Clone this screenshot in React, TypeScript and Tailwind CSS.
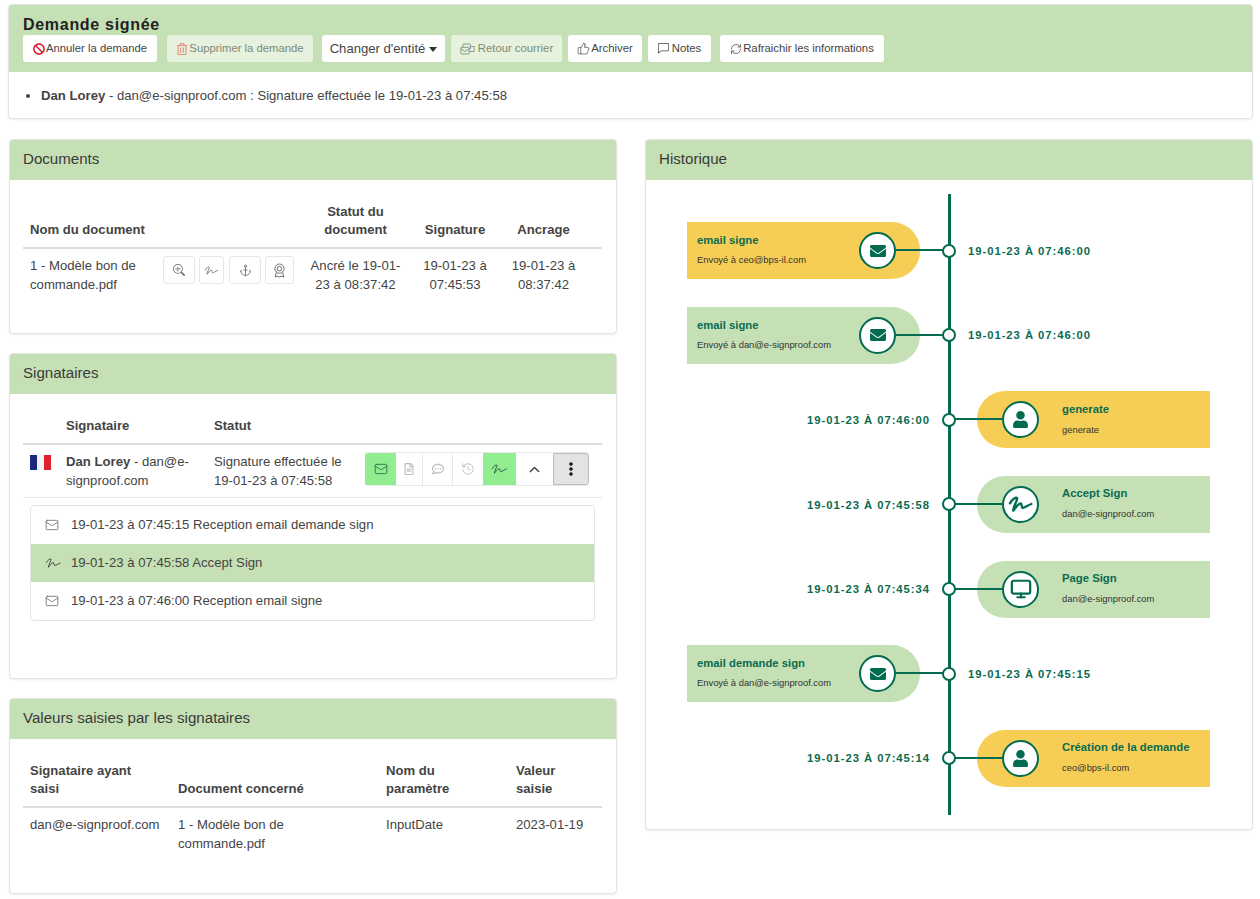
import React from "react";
import { BsZoomIn, BsThreeDotsVertical, BsChevronUp, BsChatLeft } from "react-icons/bs";
import { FaBan, FaEnvelope, FaRegCommentDots, FaRegFileAlt, FaRegTrashAlt, FaUser } from "react-icons/fa";
import { Anchor, History, Mail, Monitor, RefreshCw, ThumbsUp } from "lucide-react";

function SignIcon({ className = "w-[18px] h-[14px]" }: { className?: string }) {
  return (
    <svg viewBox="0 0 20 14" fill="none" stroke="currentColor" strokeWidth="1.1" strokeLinecap="round" className={className}>
      <path d="M1.5 6.500C3.500 3 6.500 1.500 7 2.500 7.500 4 4 9 4 12c0 1 3-5 5.500-5.500 1.500-.3.500 3.500 2 3.500 1.500 0 3.500-2 6.500-3" />
    </svg>
  );
}

function MailStackIcon() {
  return (
    <svg viewBox="0 0 18 14" fill="none" stroke="currentColor" strokeWidth="1" className="h-[12px] w-[15px]">
      <rect x="3.500" y="1" width="9" height="6" rx="1" />
      <rect x="1" y="5" width="10" height="8" rx="1" fill="#e6f1de" />
      <path d="M1 6.500l5 3.500 5-3.500M13 4h4v6h-6" />
    </svg>
  );
}

function RosetteIcon() {
  return (
    <svg viewBox="0 0 14 16" fill="none" stroke="currentColor" strokeWidth="1" className="h-[15px] w-[13px]">
      <circle cx="7" cy="6" r="5" />
      <circle cx="7" cy="6" r="2.500" />
      <path d="M3.500 10l-1 5 2.500-1 2 1 2-1 2.500 1-1-5" />
    </svg>
  );
}

function Flag() {
  return (
    <svg viewBox="0 0 21 15" className="mt-[3px] h-[15px] w-[21px]">
      <rect width="7" height="15" fill="#1a2a80" />
      <rect x="7" width="7" height="15" fill="#f4f4f6" />
      <rect x="14" width="7" height="15" fill="#e0202f" />
    </svg>
  );
}

function TopButton({ children, disabled, className = "" }: { children: React.ReactNode; disabled?: boolean; className?: string }) {
  return (
    <div
      className={`flex h-[27px] items-center justify-center gap-[1px] rounded-[3px] text-[11.3px] ${disabled ? "bg-[#e6f1de] text-[#7d8a78]" : "bg-white text-[#444]"} ${className}`}
    >
      {children}
    </div>
  );
}

function Card({ title, children, className = "" }: { title: string; children: React.ReactNode; className?: string }) {
  return (
    <section className={`w-[608px] overflow-hidden rounded-[4px] border border-[#e4e4e4] bg-white shadow-[0_1px_2px_rgba(0,0,0,0.08)] ${className}`}>
      <h2 className="flex h-[40px] items-center bg-[#c5e0b4] px-[13px] pb-[2px] text-[15.1px] font-normal text-[#3a3a3a]">{title}</h2>
      {children}
    </section>
  );
}

function DocButton({ children, className }: { children: React.ReactNode; className: string }) {
  return (
    <div className={`flex h-[28px] items-center justify-center rounded-[3px] border border-[#e6e6e6] text-[#666] ${className}`}>{children}</div>
  );
}

function GroupButton({ children, className }: { children: React.ReactNode; className: string }) {
  return <div className={`flex items-center justify-center ${className}`}>{children}</div>;
}

type Event = {
  title: string;
  sub: string;
  date: string;
  side: "left" | "right";
  tone: "yellow" | "green";
  icon: React.ReactNode;
};

const mail = <FaEnvelope className="h-[16px] w-[18px]" />;
const user = <FaUser className="h-[17px] w-[17px]" />;

const events: Event[] = [
  { title: "email signe", sub: "Envoyé à ceo@bps-il.com", date: "19-01-23 À 07:46:00", side: "left", tone: "yellow", icon: mail },
  { title: "email signe", sub: "Envoyé à dan@e-signproof.com", date: "19-01-23 À 07:46:00", side: "left", tone: "green", icon: mail },
  { title: "generate", sub: "generate", date: "19-01-23 À 07:46:00", side: "right", tone: "yellow", icon: user },
  { title: "Accept Sign", sub: "dan@e-signproof.com", date: "19-01-23 À 07:45:58", side: "right", tone: "green", icon: <SignIcon className="h-[20px] w-[26px] [&_path]:[stroke-width:1.8]" /> },
  { title: "Page Sign", sub: "dan@e-signproof.com", date: "19-01-23 À 07:45:34", side: "right", tone: "green", icon: <Monitor className="h-[22px] w-[22px]" strokeWidth={2.4} /> },
  { title: "email demande sign", sub: "Envoyé à dan@e-signproof.com", date: "19-01-23 À 07:45:15", side: "left", tone: "green", icon: mail },
  { title: "Création de la demande", sub: "ceo@bps-il.com", date: "19-01-23 À 07:45:14", side: "right", tone: "yellow", icon: user },
];

function Circle({ children }: { children: React.ReactNode }) {
  return (
    <div className="relative z-10 flex h-[37px] w-[37px] shrink-0 items-center justify-center rounded-full border-2 border-[#036b4f] bg-white text-[#036b4f]">
      {children}
    </div>
  );
}

function TimelineRow({ e }: { e: Event }) {
  const bg = e.tone === "yellow" ? "bg-[#f7ce55]" : "bg-[#c5e0b4]";
  const date = <span className="pt-[1px] text-[11.3px] font-bold tracking-[0.95px] whitespace-nowrap text-[#0c6b50]">{e.date}</span>;
  const text = (
    <div className="mt-[-2px]">
      <div className="text-[11.3px] leading-[14px] font-bold text-[#0c6b50]">{e.title}</div>
      <div className={`${e.side === "left" ? "mt-[6px]" : "mt-[7px]"} text-[9.4px] leading-[13px] text-[#333]`}>{e.sub}</div>
    </div>
  );
  return (
    <div className="relative grid h-[57px] grid-cols-2">
      {e.side === "left" ? (
        <>
          <div className="pl-[41px]">
            <div className={`flex h-full w-[233px] items-center justify-between rounded-r-[28px] pr-[24px] pl-[10px] ${bg}`}>
              {text}
              <Circle>{e.icon}</Circle>
            </div>
          </div>
          <div className="flex items-center pl-[19px]">{date}</div>
          <div className="absolute top-[27px] left-[250px] h-[2px] w-[50px] bg-[#036b4f]" />
        </>
      ) : (
        <>
          <div className="flex items-center justify-end pr-[19px]">{date}</div>
          <div className="pl-[28px]">
            <div className={`flex h-full w-[233px] items-center gap-[23px] rounded-l-[28px] pl-[25px] ${bg}`}>
              <Circle>{e.icon}</Circle>
              {text}
            </div>
          </div>
          <div className="absolute top-[27px] left-[306px] h-[2px] w-[50px] bg-[#036b4f]" />
        </>
      )}
      <div className="absolute top-[21.500px] left-[296px] z-10 h-[14px] w-[14px] rounded-full border-2 border-[#036b4f] bg-white" />
    </div>
  );
}

const th = "border-b-2 border-[#dedede] px-[7px] pb-[8px] pt-[9px] align-bottom text-[13.1px] leading-[18px] font-bold text-[#444]";
const td = "px-[7px] pt-[7px] pb-[7px] align-top text-[13.15px] leading-[19px] text-[#444]";

export default function App() {
  return (
    <div className="h-[899px] w-[1260px] overflow-hidden bg-white pt-[4px] pl-[8px] font-['Liberation_Sans',Arial,sans-serif] text-[#444]">
      <section className="h-[115px] w-[1245px] overflow-hidden rounded-[4px] border border-[#e4e4e4] bg-white shadow-[0_1px_2px_rgba(0,0,0,0.08)]">
        <div className="h-[67px] bg-[#c5e0b4] pt-[11px] pl-[14px]">
          <h1 className="text-[16px] leading-[18px] font-bold tracking-[0.7px] text-[#222]">Demande signée</h1>
          <div className="mt-[1px] flex">
            <TopButton className="w-[134px]">
              <FaBan className="h-[12px] w-[12px] text-[#d9182c]" />
              Annuler la demande
            </TopButton>
            <TopButton disabled className="ml-[10px] w-[146px]">
              <FaRegTrashAlt className="h-[12px] w-[12px] text-[#e58f7f]" />
              Supprimer la demande
            </TopButton>
            <div className="ml-[9px] flex h-[27px] w-[123px] items-center justify-center gap-[4px] rounded-[3px] bg-white text-[13.1px] text-[#444]">
              Changer d'entité
              <span className="mt-[1px] border-x-[4.500px] border-t-[5px] border-x-transparent border-t-[#333]" />
            </div>
            <TopButton disabled className="ml-[6px] w-[111px] gap-[3px]">
              <MailStackIcon />
              Retour courrier
            </TopButton>
            <TopButton className="ml-[6px] w-[74px]">
              <ThumbsUp className="h-[13px] w-[13px]" strokeWidth={1.25} />
              Archiver
            </TopButton>
            <TopButton className="ml-[6px] w-[63px] gap-[3px]">
              <BsChatLeft className="h-[11px] w-[11px]" />
              Notes
            </TopButton>
            <TopButton className="ml-[9px] w-[164px]">
              <RefreshCw className="h-[12px] w-[12px]" strokeWidth={1.5} />
              Rafraichir les informations
            </TopButton>
          </div>
        </div>
        <ul className="list-disc pt-[14px] pl-[32px] text-[13.15px] leading-[19px] text-[#444]">
          <li>
            <b>Dan Lorey</b> - dan@e-signproof.com : Signature effectuée le 19-01-23 à 07:45:58
          </li>
        </ul>
      </section>

      <div className="mt-[20px] ml-[1px] flex items-start gap-[28px]">
        <div className="flex flex-col gap-[19px]">
          <Card title="Documents" className="h-[195px]">
            <div className="px-[13px] pt-[14px]">
              <table className="w-[579px] table-fixed border-collapse">
                <colgroup>
                  <col className="w-[133px]" />
                  <col className="w-[146px]" />
                  <col className="w-[107px]" />
                  <col className="w-[92px]" />
                  <col className="w-[101px]" />
                </colgroup>
                <thead>
                  <tr>
                    <th className={`${th} text-left`}>Nom du document</th>
                    <th className={th}></th>
                    <th className={`${th} text-center`}>Statut du document</th>
                    <th className={`${th} text-center`}>Signature</th>
                    <th className={`${th} !pr-[23px] text-center`}>Ancrage</th>
                  </tr>
                </thead>
                <tbody>
                  <tr>
                    <td className={td}>1 - Modèle bon de commande.pdf</td>
                    <td className="pl-[7px] align-top">
                      <div className="flex pt-[7px]">
                        <DocButton className="w-[32px]">
                          <BsZoomIn className="h-[12px] w-[12px]" />
                        </DocButton>
                        <DocButton className="ml-[4px] w-[25px]">
                          <SignIcon className="h-[11px] w-[15px]" />
                        </DocButton>
                        <DocButton className="ml-[5px] w-[32px]">
                          <Anchor className="h-[13px] w-[13px]" strokeWidth={1.5} />
                        </DocButton>
                        <DocButton className="ml-[4px] w-[29px]">
                          <RosetteIcon />
                        </DocButton>
                      </div>
                    </td>
                    <td className={`${td} text-center`}>Ancré le 19-01-23 à 08:37:42</td>
                    <td className={`${td} text-center`}>19-01-23 à 07:45:53</td>
                    <td className={`${td} !pr-[23px] text-center`}>19-01-23 à 08:37:42</td>
                  </tr>
                </tbody>
              </table>
            </div>
          </Card>

          <Card title="Signataires" className="h-[326px]">
            <div className="px-[13px] pt-[14px]">
              <table className="w-[579px] table-fixed border-collapse">
                <colgroup>
                  <col className="w-[36px]" />
                  <col className="w-[148px]" />
                  <col className="w-[151px]" />
                  <col className="w-[244px]" />
                </colgroup>
                <thead>
                  <tr>
                    <th className={th}></th>
                    <th className={`${th} text-left`}>Signataire</th>
                    <th className={`${th} text-left`}>Statut</th>
                    <th className={th}></th>
                  </tr>
                </thead>
                <tbody>
                  <tr className="border-b border-[#e8e8e8]">
                    <td className={td}>
                      <Flag />
                    </td>
                    <td className={td}>
                      <b>Dan Lorey</b> - dan@e-signproof.com
                    </td>
                    <td className={td}>Signature effectuée le 19-01-23 à 07:45:58</td>
                    <td className="pl-[7px] align-top">
                      <div className="mt-[7px] flex h-[34px] w-[224px] overflow-hidden rounded-[3px] border-y border-[#e8e8e8] text-[#bdbdbd]">
                        <GroupButton className="w-[31px] bg-[#90ee90] text-[#2f6b4a]">
                          <Mail className="h-[14px] w-[14px]" strokeWidth={1.5} />
                        </GroupButton>
                        <GroupButton className="w-[27px] border-r border-[#e8e8e8]">
                          <FaRegFileAlt className="h-[12px] w-[10px]" />
                        </GroupButton>
                        <GroupButton className="w-[30px] border-r border-[#e8e8e8]">
                          <FaRegCommentDots className="h-[12px] w-[12px]" />
                        </GroupButton>
                        <GroupButton className="w-[30px]">
                          <History className="h-[14px] w-[14px]" strokeWidth={1.5} />
                        </GroupButton>
                        <GroupButton className="w-[33px] bg-[#90ee90] text-[#2f5a40]">
                          <SignIcon className="h-[12px] w-[17px]" />
                        </GroupButton>
                        <GroupButton className="w-[37px] text-[#222]">
                          <BsChevronUp className="h-[11px] w-[11px] stroke-1" />
                        </GroupButton>
                        <GroupButton className="w-[36px] rounded-r-[3px] border border-[#bdbdbd] bg-[#e3e3e3] text-[#222]">
                          <BsThreeDotsVertical className="h-[16px] w-[16px] stroke-[0.6]" />
                        </GroupButton>
                      </div>
                    </td>
                  </tr>
                </tbody>
              </table>
              <div className="mt-[7px] ml-[7px] w-[565px] overflow-hidden rounded-[4px] border border-[#e4e4e4] text-[13.15px] text-[#444]">
                <div className="flex h-[38px] items-center pl-[14px]">
                  <Mail className="mr-[12px] h-[14px] w-[14px] text-[#555]" strokeWidth={1.25} />
                  19-01-23 à 07:45:15 Reception email demande sign
                </div>
                <div className="flex h-[38px] items-center bg-[#c5e0b4] pl-[14px]">
                  <SignIcon className="mr-[9px] h-[12px] w-[17px] text-[#444]" />
                  19-01-23 à 07:45:58 Accept Sign
                </div>
                <div className="flex h-[38px] items-center pl-[14px]">
                  <Mail className="mr-[12px] h-[14px] w-[14px] text-[#555]" strokeWidth={1.25} />
                  19-01-23 à 07:46:00 Reception email signe
                </div>
              </div>
            </div>
          </Card>

          <Card title="Valeurs saisies par les signataires" className="h-[196px]">
            <div className="px-[13px] pt-[14px]">
              <table className="w-[579px] table-fixed border-collapse">
                <colgroup>
                  <col className="w-[148px]" />
                  <col className="w-[208px]" />
                  <col className="w-[130px]" />
                  <col className="w-[93px]" />
                </colgroup>
                <thead>
                  <tr>
                    <th className={`${th} text-left`}>
                      Signataire ayant
                      <br />
                      saisi
                    </th>
                    <th className={`${th} text-left`}>Document concerné</th>
                    <th className={`${th} text-left`}>
                      Nom du
                      <br />
                      paramètre
                    </th>
                    <th className={`${th} text-left`}>Valeur saisie</th>
                  </tr>
                </thead>
                <tbody>
                  <tr>
                    <td className={td}>dan@e-signproof.com</td>
                    <td className={td}>1 - Modèle bon de commande.pdf</td>
                    <td className={td}>InputDate</td>
                    <td className={td}>2023-01-19</td>
                  </tr>
                </tbody>
              </table>
            </div>
          </Card>
        </div>

        <Card title="Historique" className="h-[691px]">
          <div className="relative flex flex-col gap-[27.67px] pt-[42px]">
            <div className="absolute top-[14px] left-[302px] h-[621px] w-[2.500px] bg-[#036b4f]" />
            {events.map((e, i) => (
              <TimelineRow key={i} e={e} />
            ))}
          </div>
        </Card>
      </div>
    </div>
  );
}
